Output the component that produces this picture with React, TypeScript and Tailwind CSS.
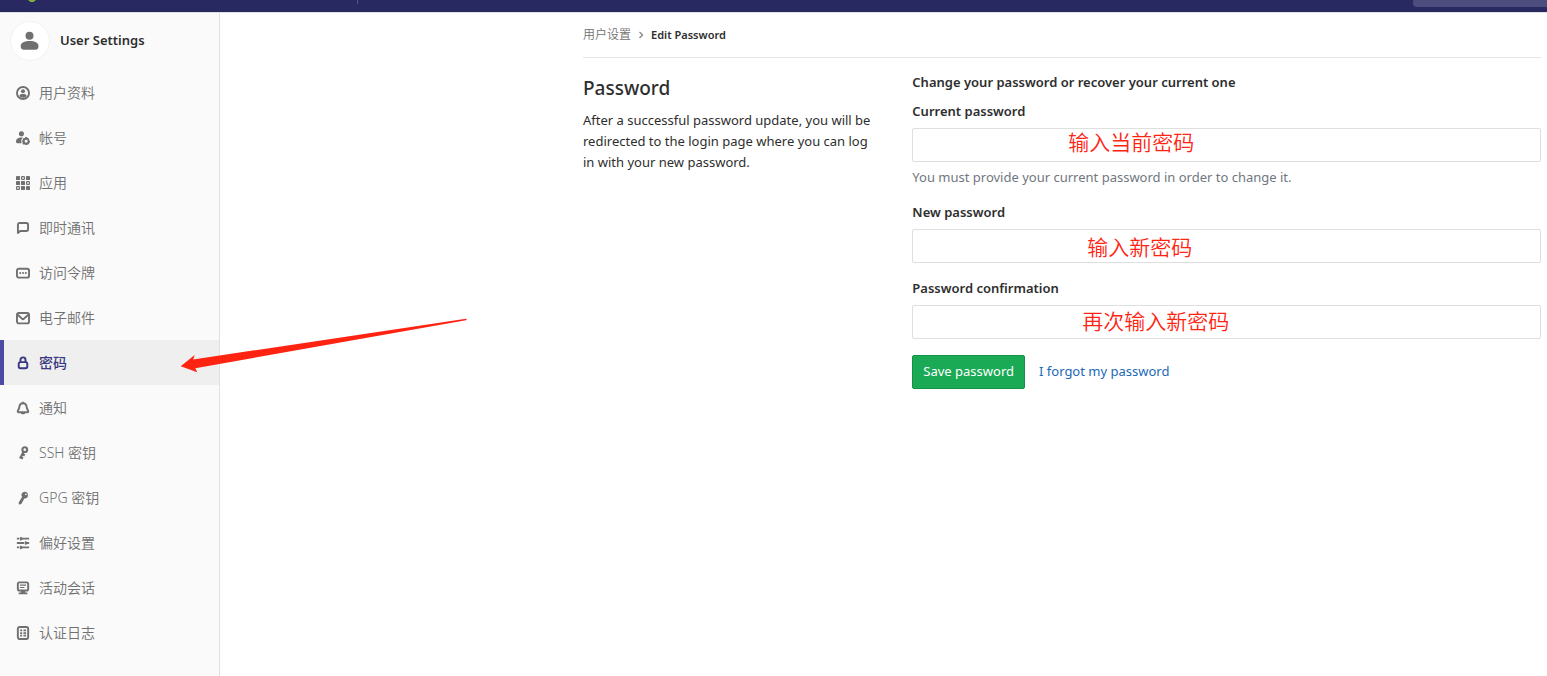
import React from "react";

type NavEntry = { label: string; icon: React.ReactNode; active?: boolean };

const stroke = { fill: "none", stroke: "currentColor", strokeWidth: 2.2 } as const;

const navEntries: NavEntry[] = [
  {
    label: "用户资料",
    icon: (
      <>
        <circle cx="8" cy="8" r="6.900" {...stroke} />
        <circle cx="8" cy="6" r="2.300" />
        <path d="M3.800 11.200C4.200 9.600 5.900 9.200 8 9.200s3.800.4 4.200 2C11.500 12.600 9.900 13.300 8 13.300s-3.500-.7-4.200-2.100z" />
      </>
    ),
  },
  {
    label: "帐号",
    icon: (
      <>
        <circle cx="6.200" cy="3.200" r="2.900" />
        <path d="M6.500 7.300C2.800 7.300 0 8.800 0 12c0 1.700 1 2 2.300 2H6.500c-1-2.400-.6-4.800 1.600-6.600z" />
        <path
          fillRule="evenodd"
          d="M10.500 6.800h2l.3 1.300 1-.3 1.300 1.500-.6 1.200L16 11v2l-1.300.5.4 1.100-1.400 1.200-1.100-.5-.6.700h-1.500l-.6-.8-1.100.6-1.400-1.300.4-1.200L7 12.700v-1.900l1-.4-.3-1.200 1.300-1.300 1.200.3zm1.100 3.300a1.700 1.700 0 1 0 0 3.400 1.700 1.700 0 0 0 0-3.400z"
        />
      </>
    ),
  },
  {
    label: "应用",
    icon: (
      <>
        <rect x="0" y="0" width="4.600" height="4.600" rx="1" />
        <rect x="6.400" y=".7" width="3.200" height="3.200" rx=".5" fill="none" stroke="currentColor" strokeWidth="1.300" />
        <rect x="11.400" y="0" width="4.600" height="4.600" rx="1" />
        <rect x="0" y="5.700" width="4.600" height="4.600" rx="1" />
        <rect x="5.700" y="5.700" width="4.600" height="4.600" rx="1" />
        <rect x="12.100" y="6.400" width="3.200" height="3.200" rx=".5" fill="none" stroke="currentColor" strokeWidth="1.300" />
        <rect x=".7" y="12.100" width="3.200" height="3.200" rx=".5" fill="none" stroke="currentColor" strokeWidth="1.300" />
        <rect x="5.700" y="11.400" width="4.600" height="4.600" rx="1" />
        <rect x="11.400" y="11.400" width="4.600" height="4.600" rx="1" />
      </>
    ),
  },
  {
    label: "即时通讯",
    icon: <path d="M2.200 13.700V4.200a2 2 0 0 1 2-2h7.600a2 2 0 0 1 2 2v5.300a2 2 0 0 1-2 2H4.800z" strokeLinejoin="round" {...stroke} />,
  },
  {
    label: "访问令牌",
    icon: (
      <>
        <rect x="1.100" y="3.100" width="13.800" height="10.200" rx="2.200" {...stroke} />
        <rect x="3.800" y="7" width="2" height="2" />
        <rect x="7" y="7" width="2" height="2" />
        <rect x="10.200" y="7" width="2" height="2" />
      </>
    ),
  },
  {
    label: "电子邮件",
    icon: (
      <>
        <rect x="1.100" y="2.300" width="13.800" height="11.800" rx="2.200" {...stroke} />
        <path d="M2 4.200l4.800 4.500a1.700 1.700 0 0 0 2.400 0L14 4.200" {...stroke} />
      </>
    ),
  },
  {
    label: "密码",
    active: true,
    icon: (
      <>
        <rect x="3.100" y="7" width="9.800" height="7" rx="2" {...stroke} />
        <path d="M5.100 7V4.500a2.900 2.900 0 0 1 5.800 0V7" {...stroke} />
      </>
    ),
  },
  {
    label: "通知",
    icon: (
      <>
        <path d="M8 2.600c2.600 0 4 1.900 4.200 4.400.2 2 1 2.700 1.600 3.900.5 1.100.2 2-1 2H3.200c-1.200 0-1.500-.9-1-2 .6-1.200 1.400-1.900 1.600-3.900C4 4.500 5.400 2.600 8 2.600z" {...stroke} />
        <path d="M7 .8h2v2H7zM5.500 13h5c0 1.500-1 2.200-2.500 2.200S5.500 14.500 5.500 13z" />
      </>
    ),
  },
  {
    label: "SSH 密钥",
    icon: (
      <>
        <circle cx="10" cy="4.200" r="2.700" {...stroke} strokeWidth="2.400" />
        <path d="M8.700 6.500L4.700 14.200M7 9.200l3 1.500M5 12.800l3 1.500" {...stroke} strokeWidth="2.600" />
      </>
    ),
  },
  {
    label: "GPG 密钥",
    icon: (
      <path
        fillRule="evenodd"
        d="M10 .8a3.900 3.900 0 1 1-.5 7.800L6.300 14.600l-2.600 1-.8-2.200 4-6.500A3.900 3.900 0 0 1 10 .8zm1.300 2a1 1 0 1 0 0 2 1 1 0 0 0 0-2z"
      />
    ),
  },
  {
    label: "偏好设置",
    icon: (
      <>
        <path d="M1 3h2.800M6 3h9M1 8h8.500M12.500 8H15M1 13h2.800M6 13h9" {...stroke} />
        <path d="M4.600 1h1.400L8 3 6 5H4.600zM10.200 6h1.400L13.600 8l-2 2h-1.400zM4.600 11h1.400L8 13l-2 2H4.600z" />
      </>
    ),
  },
  {
    label: "活动会话",
    icon: (
      <>
        <rect x="2.100" y="1.600" width="11.800" height="9.200" rx="1.800" {...stroke} />
        <path d="M4.500 4h7v1.300h-7zM4.500 6.800h5v1.300h-5zM5.500 11h5v2h2.500v2.200H3V13h2.500z" />
      </>
    ),
  },
  {
    label: "认证日志",
    icon: (
      <>
        <rect x="2.100" y="1.100" width="11.800" height="13.800" rx="2.200" {...stroke} />
        <path d="M4.700 4h2.300v2H4.700zM8.500 4h3v2h-3zM4.700 7h2.300v2H4.700zM8.500 7h3v2h-3zM4.700 10h2.300v2H4.700zM8.500 10h3v2h-3z" />
      </>
    ),
  },
];

function TopBar() {
  return (
    <header className="flex h-[13px] items-start border-b border-[#e0e0e5] bg-[#292961]">
      <svg className="ml-7 h-[2px] w-2" viewBox="0 0 8 2" aria-hidden="true">
        <path d="M0 0h8L5.500 2h-3z" fill="#7fb03c" />
      </svg>
      <span className="ml-[321px] h-1 w-px bg-[#53538a]" />
      <span className="ml-auto h-[7px] w-[134px] rounded-bl bg-[#4c4c7d]" />
    </header>
  );
}

function Sidebar() {
  return (
    <aside className="w-[220px] shrink-0 border-r border-[#e1e1e1] bg-[#fafafa]">
      <a href="#settings" className="mb-0.5 flex h-[55px] items-center gap-2.5 pl-2.5 font-semibold">
        <span className="flex size-10 items-center justify-center rounded-full border border-[#f2f2f2] bg-white text-[#707070]">
          <svg className="size-5" viewBox="0 0 20 20" fill="currentColor" aria-hidden="true">
            <circle cx="9.500" cy="4.800" r="4" />
            <path d="M.7 15c0-3.400 3.800-5 8.900-5s8.900 1.600 8.900 5c0 2.300-.8 3.800-3.400 3.800H4.100C1.500 18.800.7 17.300.7 15z" />
          </svg>
        </span>
        User Settings
      </a>
      <nav>
        <ul>
          {navEntries.map((entry) => (
            <li key={entry.label}>
              <a
                href="#nav"
                aria-current={entry.active ? "page" : undefined}
                className={
                  entry.active
                    ? "flex h-[45px] items-center gap-2 border-l-4 border-[#4b4ba3] bg-[#efefef] pl-3 text-sm font-medium text-[#393982]"
                    : "flex h-[45px] items-center gap-2 pl-4 text-sm font-[350] text-[#707070]"
                }
              >
                <svg className="size-3.5" viewBox="0 0 16 16" fill="currentColor" aria-hidden="true">
                  {entry.icon}
                </svg>
                <span className="pl-px">{entry.label}</span>
              </a>
            </li>
          ))}
        </ul>
      </nav>
    </aside>
  );
}

type FieldProps = { id: string; label: string; note: string; noteClass: string; help?: string };

function Field({ id, label, note, noteClass, help }: FieldProps) {
  return (
    <div className="mb-[15px]">
      <label htmlFor={id} className="mb-1.5 block leading-[21px] font-semibold">
        {label}
      </label>
      <div className="relative">
        <input
          id={id}
          type="password"
          className="block h-[34px] w-full rounded-xs border border-[#dfdfdf] bg-white px-2.5"
        />
        <span
          className={`pointer-events-none absolute text-[21px] leading-7 font-[350] whitespace-nowrap text-[#ff2312] ${noteClass}`}
        >
          {note}
        </span>
      </div>
      {help && <p className="mt-[5px] -mb-px leading-[21px] text-[#707780]">{help}</p>}
    </div>
  );
}

export default function App() {
  return (
    <div className="relative flex min-h-screen flex-col bg-white font-['Noto_Sans','Noto_Sans_CJK_SC',sans-serif] text-[13px] text-[#2e2e2e]">
      <TopBar />
      <div className="flex flex-1">
        <Sidebar />
        <main className="mr-1.5 ml-auto w-full max-w-[958px]">
          <nav className="flex h-[45px] items-center border-b border-[#e5e5e5]" aria-label="Breadcrumb">
            <a href="#settings" className="text-xs font-[350] text-[#707070]">
              用户设置
            </a>
            <svg className="mx-1.5 size-2" viewBox="0 0 8 8" fill="none" stroke="#868686" strokeWidth="1.300" aria-hidden="true">
              <path d="M2.500 1l3 3-3 3" />
            </svg>
            <a href="#password" className="text-[11px] font-semibold">
              Edit Password
            </a>
          </nav>
          <div className="grid grid-cols-12 gap-x-[30px] pt-3">
            <section className="col-span-4">
              <h4 className="text-[19px] leading-9 font-medium">Password</h4>
              <p className="mt-1 leading-[21px]">
                After a successful password update, you will be redirected to the login page where you can log in with
                your new password.
              </p>
            </section>
            <form className="col-span-8">
              <h5 className="mb-[7px] leading-6 font-semibold">Change your password or recover your current one</h5>
              <Field
                id="current"
                label="Current password"
                note="输入当前密码"
                noteClass="left-[156px] top-0"
                help="You must provide your current password in order to change it."
              />
              <Field id="new" label="New password" note="输入新密码" noteClass="left-[175px] top-1" />
              <Field id="confirm" label="Password confirmation" note="再次输入新密码" noteClass="left-[170px] top-0.5" />
              <div className="flex items-center gap-3.5 pt-px">
                <button
                  type="button"
                  className="h-[34px] rounded-xs border border-[#168f48] bg-[#1aaa55] px-2.5 text-white"
                >
                  Save password
                </button>
                <a href="#forgot" className="text-[#1b69b6]">
                  I forgot my password
                </a>
              </div>
            </form>
          </div>
        </main>
      </div>
      <svg
        className="pointer-events-none absolute top-[318px] left-[180px] h-[55px] w-[288px]"
        viewBox="180 318 288 55"
        aria-hidden="true"
      >
        <path
          d="M180.700 366.300L194.700 355l-1.500 4.500L466 318.700q1.200.6 0 1.500L195.300 368.300l2 4z"
          fill="#ff2312"
        />
      </svg>
    </div>
  );
}
